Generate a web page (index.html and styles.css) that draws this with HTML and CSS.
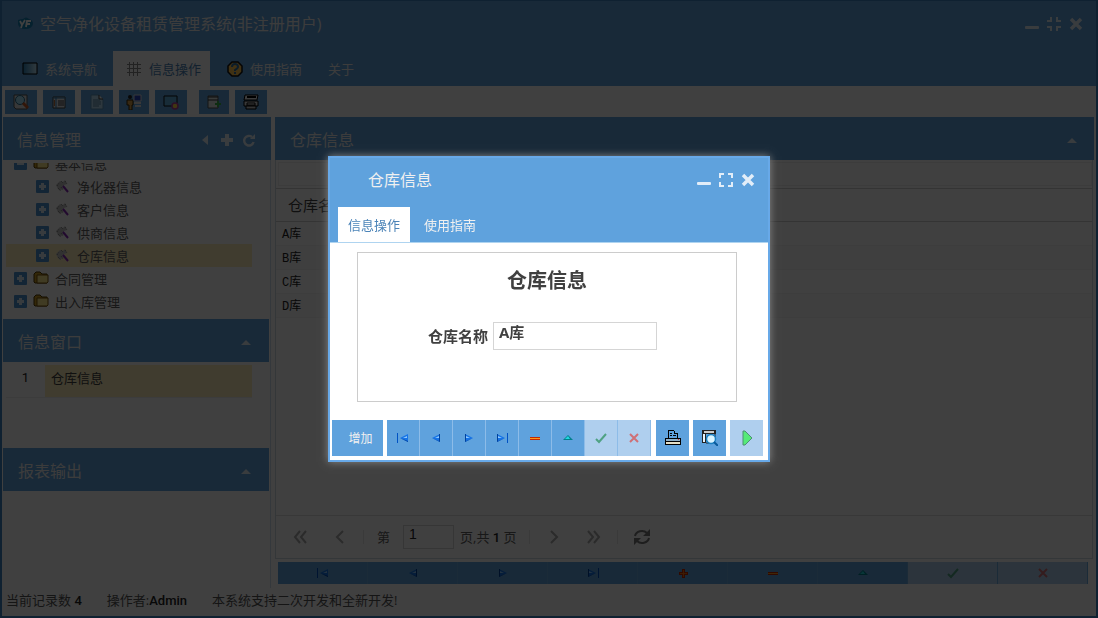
FILE: index.html
```html
<!DOCTYPE html>
<html lang="zh-CN">
<head>
    <meta charset="UTF-8">
    <meta name="viewport" content="width=device-width, initial-scale=1.0">
    <title>空气净化设备租赁管理系统</title>
    <link rel="stylesheet" href="styles.css">
</head>
<body>
    <!-- 图标 -->
    <svg class="sprite" aria-hidden="true">
        <symbol id="i-first" viewBox="0 0 16 16"><path d="M2 3h1v10H2z" fill="#0052c4"/><path d="M13 4v8L5 8z" fill="#1673e6"/><path d="M13 4v8L5 8l8 3z" fill="#00419c"/><path d="M8 8l4-2v2z" fill="#8cc8ff"/></symbol>
        <symbol id="i-prev" viewBox="0 0 16 16"><path d="M12 4v8L4 8z" fill="#1673e6"/><path d="M12 4v8L4 8l7 3V4z" fill="#00419c"/><path d="M7 8l4-2v2z" fill="#8cc8ff"/></symbol>
        <symbol id="i-next" viewBox="0 0 16 16"><path d="M4 4v8l8-4z" fill="#1673e6"/><path d="M4 4v8l8-4-7 3V4z" fill="#00419c"/><path d="M5 6l4 2H5z" fill="#8cc8ff"/></symbol>
        <symbol id="i-last" viewBox="0 0 16 16"><path d="M13 3h1v10h-1z" fill="#0052c4"/><path d="M3 4v8l8-4z" fill="#1673e6"/><path d="M3 4v8l8-4-7 3V4z" fill="#00419c"/><path d="M4 6l4 2H4z" fill="#8cc8ff"/></symbol>
        <symbol id="i-add" viewBox="0 0 16 16"><path d="M7 4h3v3h3v3h-3v3H7v-3H4V7h3z" fill="#c32a00"/><path d="M8 5h1v3h3v1H9v3H8V9H5V8h3z" fill="#f07010"/></symbol>
        <symbol id="i-del" viewBox="0 0 16 16"><path d="M3 7h10v3H3z" fill="#c32a00"/><path d="M3 8h10v1H3z" fill="#ff9a1c"/></symbol>
        <symbol id="i-edit" viewBox="0 0 16 16"><path d="M3 10l5-5 5 5z" fill="#00808c"/><path d="M5 9l3-3 2 3z" fill="#20d8e0"/></symbol>
        <symbol id="i-ok" viewBox="0 0 16 16"><path d="M3 9l3 3 7-8" fill="none" stroke="#4fa283" stroke-width="2"/></symbol>
        <symbol id="i-no" viewBox="0 0 16 16"><path d="M4 4l8 8M12 4l-8 8" stroke="#cf7076" stroke-width="2"/></symbol>
        <symbol id="i-min" viewBox="0 0 16 16"><rect x="1" y="10" width="14" height="3" rx="1" fill="#e2edf8"/></symbol>
        <symbol id="i-restore" viewBox="0 0 16 16"><path d="M5 1v4H1M11 1v4h4M5 15v-4H1M11 15v-4h4" fill="none" stroke="#e2edf8" stroke-width="2"/></symbol>
        <symbol id="i-max" viewBox="0 0 16 16"><path d="M2 6V2h4M10 2h4v4M14 10v4h-4M6 14H2v-4" fill="none" stroke="#e2edf8" stroke-width="2"/></symbol>
        <symbol id="i-close" viewBox="0 0 16 16"><path d="M3 3l10 10M13 3L3 13" stroke="#e2edf8" stroke-width="3.5"/></symbol>
        <symbol id="i-up" viewBox="0 0 16 16"><path d="M3 11l5-5 5 5z" fill="#e2edf8"/></symbol>
        <symbol id="i-left" viewBox="0 0 16 16"><path d="M11 3v10L5 8z" fill="#e2edf8"/></symbol>
        <symbol id="i-plus" viewBox="0 0 16 16"><path d="M6 2h4v4h4v4h-4v4H6v-4H2V6h4z" fill="#e2edf8"/></symbol>
        <symbol id="i-reload" viewBox="0 0 16 16"><path d="M11 5a4.800 4.800 0 1 0 1.600 5" fill="none" stroke="#e2edf8" stroke-width="2.400"/><path d="M9 7h5V2z" fill="#e2edf8"/></symbol>
        <symbol id="i-folder" viewBox="0 0 16 16"><path d="M1 11V3l2-2h4l2 2h5v9H2z" fill="#c99b23" stroke="#513900"/><path d="M4 4h11v7l-1 1H4z" fill="#ffe98c" stroke="#77530a"/></symbol>
        <symbol id="i-leaf" viewBox="0 0 16 16"><path d="M1 6l4-4 3 1 2-2 2 4-3 1v3l-4 3-2-2z" fill="#c4c4c4"/><path d="M2 7l2-3M6 2l2 2M3 9l3 3M10 2l2 3M6 8l2 3" stroke="#777" stroke-dasharray="1 1"/><path d="M8 7l5 6" stroke="#862bb8" stroke-width="2"/></symbol>
        <symbol id="i-expand" viewBox="0 0 13 13"><rect width="13" height="13" rx="1" fill="#4c94d4"/><path d="M5 3h3v2h2v3H8v2H5V8H3V5h2z" fill="#dcebf8"/></symbol>
        <symbol id="i-collapse" viewBox="0 0 13 13"><rect width="13" height="13" rx="1" fill="#4c94d4"/><path d="M3 5h7v3H3z" fill="#dcebf8"/></symbol>
    </svg>

    <div class="app">
        <header class="app-header">
            <div class="title-bar">
                <svg class="logo" viewBox="0 0 16 16"><path d="M1 4q3-1 5-1 3-3 6 0 4 1 4 5-1 5-8 5-6 0-7-5z" fill="#1682b8"/><path d="M3 5l2 4 3-5M5 9l-1 3M14 5h-4l-1 6M9 8h4" fill="none" stroke="#fff" stroke-width="1.800"/></svg>
                <h1>空气净化设备租赁管理系统(非注册用户)</h1>
                <div class="tools">
                    <button aria-label="最小化"><svg><use href="#i-min"/></svg></button>
                    <button aria-label="还原"><svg><use href="#i-restore"/></svg></button>
                    <button aria-label="关闭"><svg><use href="#i-close"/></svg></button>
                </div>
            </div>
            <nav class="tabs">
                <button class="tab"><svg viewBox="0 0 16 16"><defs><linearGradient id="g"><stop stop-color="#2f83b8"/><stop offset="1" stop-color="#c3e7fa"/></linearGradient></defs><path d="M1 2h14v11H1z" fill="url(#g)" stroke="#000"/></svg>系统导航</button>
                <button class="tab active"><svg viewBox="0 0 16 16"><path d="M1 3.500h14M1 7.500h14M1 11.500h14M3.500 1v14M7.500 1v14M11.500 1v14" stroke="#888"/></svg>信息操作</button>
                <button class="tab"><svg viewBox="0 0 16 16"><path d="M5 1h6l4 4v6l-4 4H5l-4-4V5z" fill="#ffc44c" stroke="#111" stroke-width="1.500"/><path d="M5 6q0-3 3-3t3 3q0 1-3 3v1M8 11v2" fill="none" stroke="#2d6fa5" stroke-width="2"/></svg>使用指南</button>
                <button class="tab">关于</button>
            </nav>
        </header>

        <div class="toolbar">
            <button aria-label="查询"><svg viewBox="0 0 16 16"><path d="M1 1h13v14H3l-2-2z" fill="#ddd" stroke="#555"/><circle cx="7" cy="6" r="4.500" fill="#a6e4fa" stroke="#286a8c"/><path d="M10 9l5 5" stroke="#c65a24" stroke-width="3"/></svg></button>
            <button aria-label="列表"><svg viewBox="0 0 16 16"><path d="M2 3h12v11H2z" fill="#e3e7eb" stroke="#444"/><path d="M5 3v11M2 4h12" stroke="#2d7bb0"/><path d="M7 7h6M7 9h6M7 11h6" stroke="#333"/><path d="M3 6h1v6H3z" fill="#bc7340"/></svg></button>
            <button aria-label="文档"><svg viewBox="0 0 16 16"><path d="M2 1h8l4 4v10H2z" fill="#b5daf2" stroke="#5993b8"/><path d="M10 1v4h4" fill="#fff" stroke="#333"/><path d="M4 6h7M4 8h8M4 10h8M4 12h6" stroke="#5587a6"/></svg></button>
            <button class="narrow" aria-label="用户"><svg viewBox="0 0 16 16"><circle cx="4" cy="3" r="2" fill="#222"/><path d="M1 6h6v5H6v5H3v-5H1z" fill="#d6a14d" stroke="#3c2500"/><path d="M8 1h7v6H8z" fill="#2b46c4" stroke="#ddd"/><path d="M8 9h7M9 12h6" stroke="#ddd" stroke-width="2"/></svg></button>
            <button aria-label="屏幕"><svg viewBox="0 0 16 16"><path d="M1 2h13v10H1z" fill="#61b1de" stroke="#111"/><circle cx="12" cy="12" r="3" fill="#ffdb48" stroke="#b4419b" stroke-width="1.500"/></svg></button>
            <button class="narrow gap" aria-label="导入"><svg viewBox="0 0 16 16"><path d="M2 2h10v12H2z" fill="#dfe6e4" stroke="#555"/><path d="M2 3h10M2 6h10" stroke="#333"/><path d="M9 10h6M12 7v6" stroke="#3ab54a" stroke-width="2"/></svg></button>
            <button aria-label="打印"><svg viewBox="0 0 16 16"><path d="M2 1h13l-1 5H1z" fill="#eee" stroke="#000"/><path d="M4 3h9" stroke="#000" stroke-width="2"/><path d="M1 7h14v5H1z" fill="#ddd" stroke="#000"/><path d="M4 9h8v2H4z" fill="#fff" stroke="#000"/><path d="M3 12h10v3H3z" fill="#ccc" stroke="#000"/></svg></button>
        </div>

        <div class="main">
            <aside class="sidebar">
                <div class="panel-head wide">
                    <h2>信息管理</h2>
                    <div class="tools">
                        <button aria-label="收起"><svg><use href="#i-left"/></svg></button>
                        <button aria-label="展开"><svg><use href="#i-plus"/></svg></button>
                        <button aria-label="刷新"><svg><use href="#i-reload"/></svg></button>
                    </div>
                </div>
                <ul class="tree">
                    <li><svg class="exp"><use href="#i-collapse"/></svg><svg><use href="#i-folder"/></svg>基本信息</li>
                    <li class="child"><svg class="exp"><use href="#i-expand"/></svg><svg><use href="#i-leaf"/></svg>净化器信息</li>
                    <li class="child"><svg class="exp"><use href="#i-expand"/></svg><svg><use href="#i-leaf"/></svg>客户信息</li>
                    <li class="child"><svg class="exp"><use href="#i-expand"/></svg><svg><use href="#i-leaf"/></svg>供商信息</li>
                    <li class="child selected"><svg class="exp"><use href="#i-expand"/></svg><svg><use href="#i-leaf"/></svg>仓库信息</li>
                    <li><svg class="exp"><use href="#i-expand"/></svg><svg><use href="#i-folder"/></svg>合同管理</li>
                    <li><svg class="exp"><use href="#i-expand"/></svg><svg><use href="#i-folder"/></svg>出入库管理</li>
                </ul>
                <div class="panel-head">
                    <h2>信息窗口</h2>
                    <div class="tools"><button aria-label="折叠"><svg><use href="#i-up"/></svg></button></div>
                </div>
                <div class="window-list">
                    <table>
                        <tr><td class="num">1</td><td class="name">仓库信息</td></tr>
                    </table>
                </div>
                <div class="panel-head">
                    <h2>报表输出</h2>
                    <div class="tools"><button aria-label="折叠"><svg><use href="#i-up"/></svg></button></div>
                </div>
            </aside>

            <section class="content">
                <div class="panel-head">
                    <h2>仓库信息</h2>
                    <div class="tools"><button aria-label="折叠"><svg><use href="#i-up"/></svg></button></div>
                </div>
                <div class="grid">
                    <div class="grid-bar"></div>
                    <table>
                        <thead><tr><th>仓库名称</th></tr></thead>
                        <tbody>
                            <tr><td>A库</td></tr>
                            <tr><td>B库</td></tr>
                            <tr><td>C库</td></tr>
                            <tr><td>D库</td></tr>
                        </tbody>
                    </table>
                    <div class="paging">
                        <button aria-label="首页"><svg viewBox="0 0 16 16"><path d="M8 2L3 8l5 6M14 2L9 8l5 6"/></svg></button>
                        <button aria-label="上一页"><svg viewBox="0 0 16 16"><path d="M11 2L5 8l6 6"/></svg></button>
                        <i></i>
                        <label for="page">第</label>
                        <input id="page" type="text" value="1">
                        <span>页,共 <b>1</b> 页</span>
                        <i></i>
                        <button aria-label="下一页"><svg viewBox="0 0 16 16"><path d="M5 2l6 6-6 6"/></svg></button>
                        <button aria-label="末页"><svg viewBox="0 0 16 16"><path d="M2 2l5 6-5 6M8 2l5 6-5 6"/></svg></button>
                        <i></i>
                        <button class="sync" aria-label="刷新"><svg viewBox="0 0 16 16"><path d="M1 7a7 6 0 0 1 12-3M15 9a7 6 0 0 1-12 3"/><path class="tip" d="M16 0v7H9zM0 16V9h7z"/></svg></button>
                    </div>
                </div>
                <div class="nav-bar">
                    <button aria-label="第一条"><svg><use href="#i-first"/></svg></button>
                    <button aria-label="上一条"><svg><use href="#i-prev"/></svg></button>
                    <button aria-label="下一条"><svg><use href="#i-next"/></svg></button>
                    <button aria-label="最后一条"><svg><use href="#i-last"/></svg></button>
                    <button aria-label="增加"><svg><use href="#i-add"/></svg></button>
                    <button aria-label="删除"><svg><use href="#i-del"/></svg></button>
                    <button aria-label="修改"><svg><use href="#i-edit"/></svg></button>
                    <button aria-label="保存" disabled><svg><use href="#i-ok"/></svg></button>
                    <button aria-label="取消" disabled><svg><use href="#i-no"/></svg></button>
                </div>
            </section>
        </div>

        <footer class="status">
            <span>当前记录数 <b>4</b></span>
            <span>操作者:<b>Admin</b></span>
            <span>本系统支持二次开发和全新开发!</span>
        </footer>
    </div>

    <!-- 弹出窗口 -->
    <div class="mask">
        <div class="dialog" role="dialog" aria-labelledby="dialog-title">
            <div class="dialog-head">
                <h2 id="dialog-title">仓库信息</h2>
                <div class="tools">
                    <button aria-label="最小化"><svg><use href="#i-min"/></svg></button>
                    <button aria-label="最大化"><svg><use href="#i-max"/></svg></button>
                    <button aria-label="关闭"><svg><use href="#i-close"/></svg></button>
                </div>
            </div>
            <div class="dialog-tabs">
                <button class="tab active">信息操作</button>
                <button class="tab">使用指南</button>
            </div>
            <form class="form">
                <h3>仓库信息</h3>
                <div class="field">
                    <label for="store">仓库名称</label>
                    <input id="store" type="text" value="A库">
                </div>
            </form>
            <div class="dialog-bar">
                <button class="text">增加</button>
                <div class="group">
                    <button aria-label="第一条"><svg><use href="#i-first"/></svg></button>
                    <button aria-label="上一条"><svg><use href="#i-prev"/></svg></button>
                    <button aria-label="下一条"><svg><use href="#i-next"/></svg></button>
                    <button aria-label="最后一条"><svg><use href="#i-last"/></svg></button>
                    <button aria-label="删除"><svg><use href="#i-del"/></svg></button>
                    <button aria-label="修改"><svg><use href="#i-edit"/></svg></button>
                    <button aria-label="保存" disabled><svg><use href="#i-ok"/></svg></button>
                    <button aria-label="取消" disabled><svg><use href="#i-no"/></svg></button>
                </div>
                <button aria-label="打印"><svg viewBox="0 0 16 16" shape-rendering="crispEdges"><path d="M3 0h6v1H4v7H3zM9 1h1v2h3v5h-1V4H9zM5 3h2v1H5zM5 5h2v1H5zM8 5h3v1H8z" fill="#000"/><path d="M0 8h16v7H0z" fill="#000"/><path d="M1 9h14v2H1z" fill="#8fb0c8"/><path d="M1 12h14v2H1z" fill="#e5e0c8"/><path d="M13 9h1v1h-1z" fill="#d33"/></svg></button>
                <button aria-label="预览"><svg viewBox="0 0 16 16"><path d="M0 0h14v4H0z" fill="#222"/><path d="M2 1h10v2H2z" fill="#ccc"/><path d="M0 4h4v9H0z" fill="#222"/><path d="M1 4h2v8H1z" fill="#e8f5ff"/><path d="M13 3v4M4 13h3" stroke="#222"/><circle cx="9" cy="9" r="4.500" fill="#d9f4ff" stroke="#1b7fc0" stroke-width="1.500"/><path d="M12 12l4 4" stroke="#0a5b9c" stroke-width="2"/></svg></button>
                <button aria-label="执行" disabled><svg viewBox="0 0 16 16"><path d="M4 1h2l7 7-7 7H4z" fill="#55ea78" stroke="#4d8f75"/></svg></button>
            </div>
        </div>
    </div>
</body>
</html>
```

FILE: styles.css
```css
* {
    box-sizing: border-box;
}
body {
    margin: 0;
    font-family: "Open Sans", "Noto Sans CJK SC", sans-serif;
    font-size: 13px;
    line-height: 20px;
    color: #404040;
}
h1, h2, h3, ul {
    margin: 0;
    padding: 0;
}
button {
    display: flex;
    align-items: center;
    justify-content: center;
    padding: 0;
    border: none;
    background: none;
    font: inherit;
    color: inherit;
}
svg {
    flex: none;
    width: 16px;
    height: 16px;
}
input {
    font: inherit;
    color: inherit;
    background-color: #fff;
    border: 1px solid #d5d5d5;
}
table {
    border-collapse: collapse;
}
.sprite {
    display: none;
}
.app {
    display: flex;
    flex-direction: column;
    height: 100vh;
    border: solid #3f82c4;
    border-width: 1px 2px 2px;
    background-color: #fff;
}

/* 顶部 */
.app-header {
    padding-left: 10px;
    background-color: #5fa2dd;
    color: #f0f0f0;
}
.title-bar {
    display: flex;
    align-items: center;
    height: 50px;
    padding: 0 12px 5px 5px;
}
.title-bar h1 {
    margin-left: 7px;
    font-size: 16px;
    font-weight: normal;
    flex: 1;
}
.tools {
    display: flex;
    gap: 6px;
}
.tabs {
    display: flex;
    height: 35px;
}
.tab {
    padding: 0 11px;
}
.tab svg {
    margin-right: 7px;
}
.tabs .tab {
    padding: 0 12px 0 10px;
}
.tabs .tab + .tab {
    padding: 0 9px 0 13px;
    margin-left: 4px;
}
.tab.active {
    background-color: #fff;
    color: #4c84b8;
}
.toolbar {
    display: flex;
    gap: 6px;
    padding: 4px 3px 3px;
}
.toolbar button {
    width: 32px;
    height: 24px;
    background-color: #5fa2dd;
}
.toolbar .narrow {
    width: 30px;
}
.toolbar .gap {
    margin-left: 6px;
}

/* 主区域 */
.main {
    flex: 1;
    display: flex;
    gap: 4px;
    min-height: 0;
    padding: 0 2px 0 1px;
}
.sidebar {
    width: 268px;
    border-right: 1px solid #d0e0f0;
}
.panel-head {
    display: flex;
    align-items: center;
    justify-content: space-between;
    height: 43px;
    padding: 2px 15px 0 15px;
    background-color: #5fa2dd;
    color: #f0f0f0;
}
.panel-head h2 {
    font-size: 16px;
    font-weight: normal;
}
.sidebar .panel-head {
    margin-right: 1px;
}
.sidebar .wide {
    padding-right: 14px;
    padding-left: 14px;
    margin-right: -1px;
}
.tree {
    display: flex;
    flex-direction: column;
    justify-content: flex-end;
    height: 156px;
    margin: 3px 18px 0 3px;
    padding-bottom: 6px;
    overflow: hidden;
    list-style: none;
    color: #606060;
}
.tree li {
    flex: none;
    display: flex;
    align-items: center;
    gap: 6px;
    height: 23px;
    padding-left: 8px;
}
.tree .child {
    padding-left: 30px;
}
.tree .exp {
    width: 13px;
    height: 13px;
}
.tree .selected {
    background-color: #ffefbb;
}
.window-list {
    height: 86px;
    padding: 3px 18px 0 3px;
}
.window-list table {
    width: 100%;
}
.window-list td {
    height: 32px;
    padding: 0 6px 6px;
    border-bottom: 1px solid #ededed;
}
.window-list .num {
    width: 39px;
    text-align: center;
    font-family: Roboto, sans-serif;
    color: #222;
}
.window-list .name {
    background-color: #ffefbb;
}
.content {
    flex: 1;
    display: flex;
    flex-direction: column;
    min-width: 0;
}
.content .panel-head {
    padding-right: 14px;
}
.grid {
    flex: 1;
    display: flex;
    flex-direction: column;
    margin-right: 1px;
    border: solid #cfdae4;
    border-width: 0 1px 1px;
}
.grid-bar {
    height: 24px;
    margin: 2px 0 2px 2px;
    border: 1px solid #f0f0f0;
}
.grid table {
    width: 100%;
}
.grid th {
    height: 33px;
    padding: 0 12px;
    border: solid #d0d0d0;
    border-width: 1px 0;
    font-size: 15px;
    font-weight: normal;
    text-align: left;
}
.grid td {
    height: 24px;
    padding: 2px 6px 0;
    border-bottom: 1px solid #f4f4f4;
    font-family: "Liberation Mono", "Noto Sans CJK SC", monospace;
    font-size: 12px;
    color: #222;
}
.grid tr:nth-child(even) td {
    background-color: #fafafa;
}
.paging {
    display: flex;
    align-items: center;
    height: 43px;
    margin-top: auto;
    padding-left: 4px;
    border-top: 1px solid #e0e0e0;
    color: #606060;
}
.paging button {
    width: 40px;
}
.paging path {
    fill: none;
    stroke: #aaa;
    stroke-width: 2;
}
.paging i {
    width: 1px;
    height: 14px;
    margin: 0 4px 0 3px;
    background-color: #e8e8e8;
}
.paging label {
    margin: 0 13px 0 9px;
}
.paging input {
    width: 51px;
    height: 24px;
    margin-right: 6px;
    padding: 0 5px 7px;
    font-family: "Liberation Sans", sans-serif;
    font-size: 14px;
    color: #222;
}
.paging span {
    margin-right: 9px;
}
.paging .sync path {
    stroke: #777;
}
.paging .sync .tip {
    fill: #777;
    stroke: none;
}
.nav-bar {
    display: flex;
    margin: 3px 6px 4px 3px;
}
.nav-bar button {
    flex: 1;
    height: 22px;
    background-color: #5fa2dd;
    border-right: 1px solid #6eaae0;
}
.nav-bar button:disabled {
    background-color: #afcfee;
}
.status {
    display: flex;
    gap: 25px;
    height: 28px;
    padding: 2px 4px;
    color: #555;
}
.status b, .paging b {
    font-family: Roboto, sans-serif;
    font-weight: 500;
    color: #222;
}

/* 弹出窗口 */
.mask {
    position: fixed;
    inset: 0;
    display: flex;
    align-items: center;
    justify-content: center;
    background-color: rgba(0, 0, 0, 0.75);
}
.dialog {
    width: 442px;
    border: 2px solid #68a9e8;
    background-color: #fff;
    box-shadow: 0 0 8px #888;
}
.dialog-head {
    display: flex;
    align-items: center;
    justify-content: space-between;
    height: 49px;
    padding: 0 12px 6px 38px;
    background-color: #5fa2dd;
    color: #f0f0f0;
}
.dialog-head h2 {
    font-size: 16px;
    font-weight: normal;
}
.dialog-tabs {
    display: flex;
    gap: 4px;
    height: 36px;
    padding-left: 8px;
    background-color: #5fa2dd;
    border-bottom: 1px solid #afd4f0;
    color: #f0f0f0;
}
.dialog-tabs .tab {
    padding: 0 10px;
}
.form {
    height: 150px;
    margin: 9px 31px 18px 27px;
    padding-top: 14px;
    border: 1px solid #ccc;
    font-size: 15px;
    font-weight: bold;
}
.form h3 {
    font-size: 20px;
    line-height: 28px;
    text-align: center;
}
.field {
    display: flex;
    align-items: center;
    gap: 5px;
    margin: 27px 0 0 70px;
}
.field input {
    width: 164px;
    height: 28px;
    padding: 0 5px 10px;
    line-height: 16px;
}
.dialog-bar {
    display: flex;
    gap: 4px;
    padding: 0 2px 4px;
}
.dialog-bar button {
    width: 33px;
    height: 36px;
    background-color: #5fa2dd;
}
.dialog-bar .text {
    width: 51px;
    padding: 2px 0 0 6px;
    font-size: 12px;
    color: #f0f0f0;
}
.group {
    display: flex;
    margin-right: 1px;
}
.group button {
    border-right: 1px solid #8dbce8;
}
.dialog-bar button:disabled {
    background-color: #afcfee;
}
```
